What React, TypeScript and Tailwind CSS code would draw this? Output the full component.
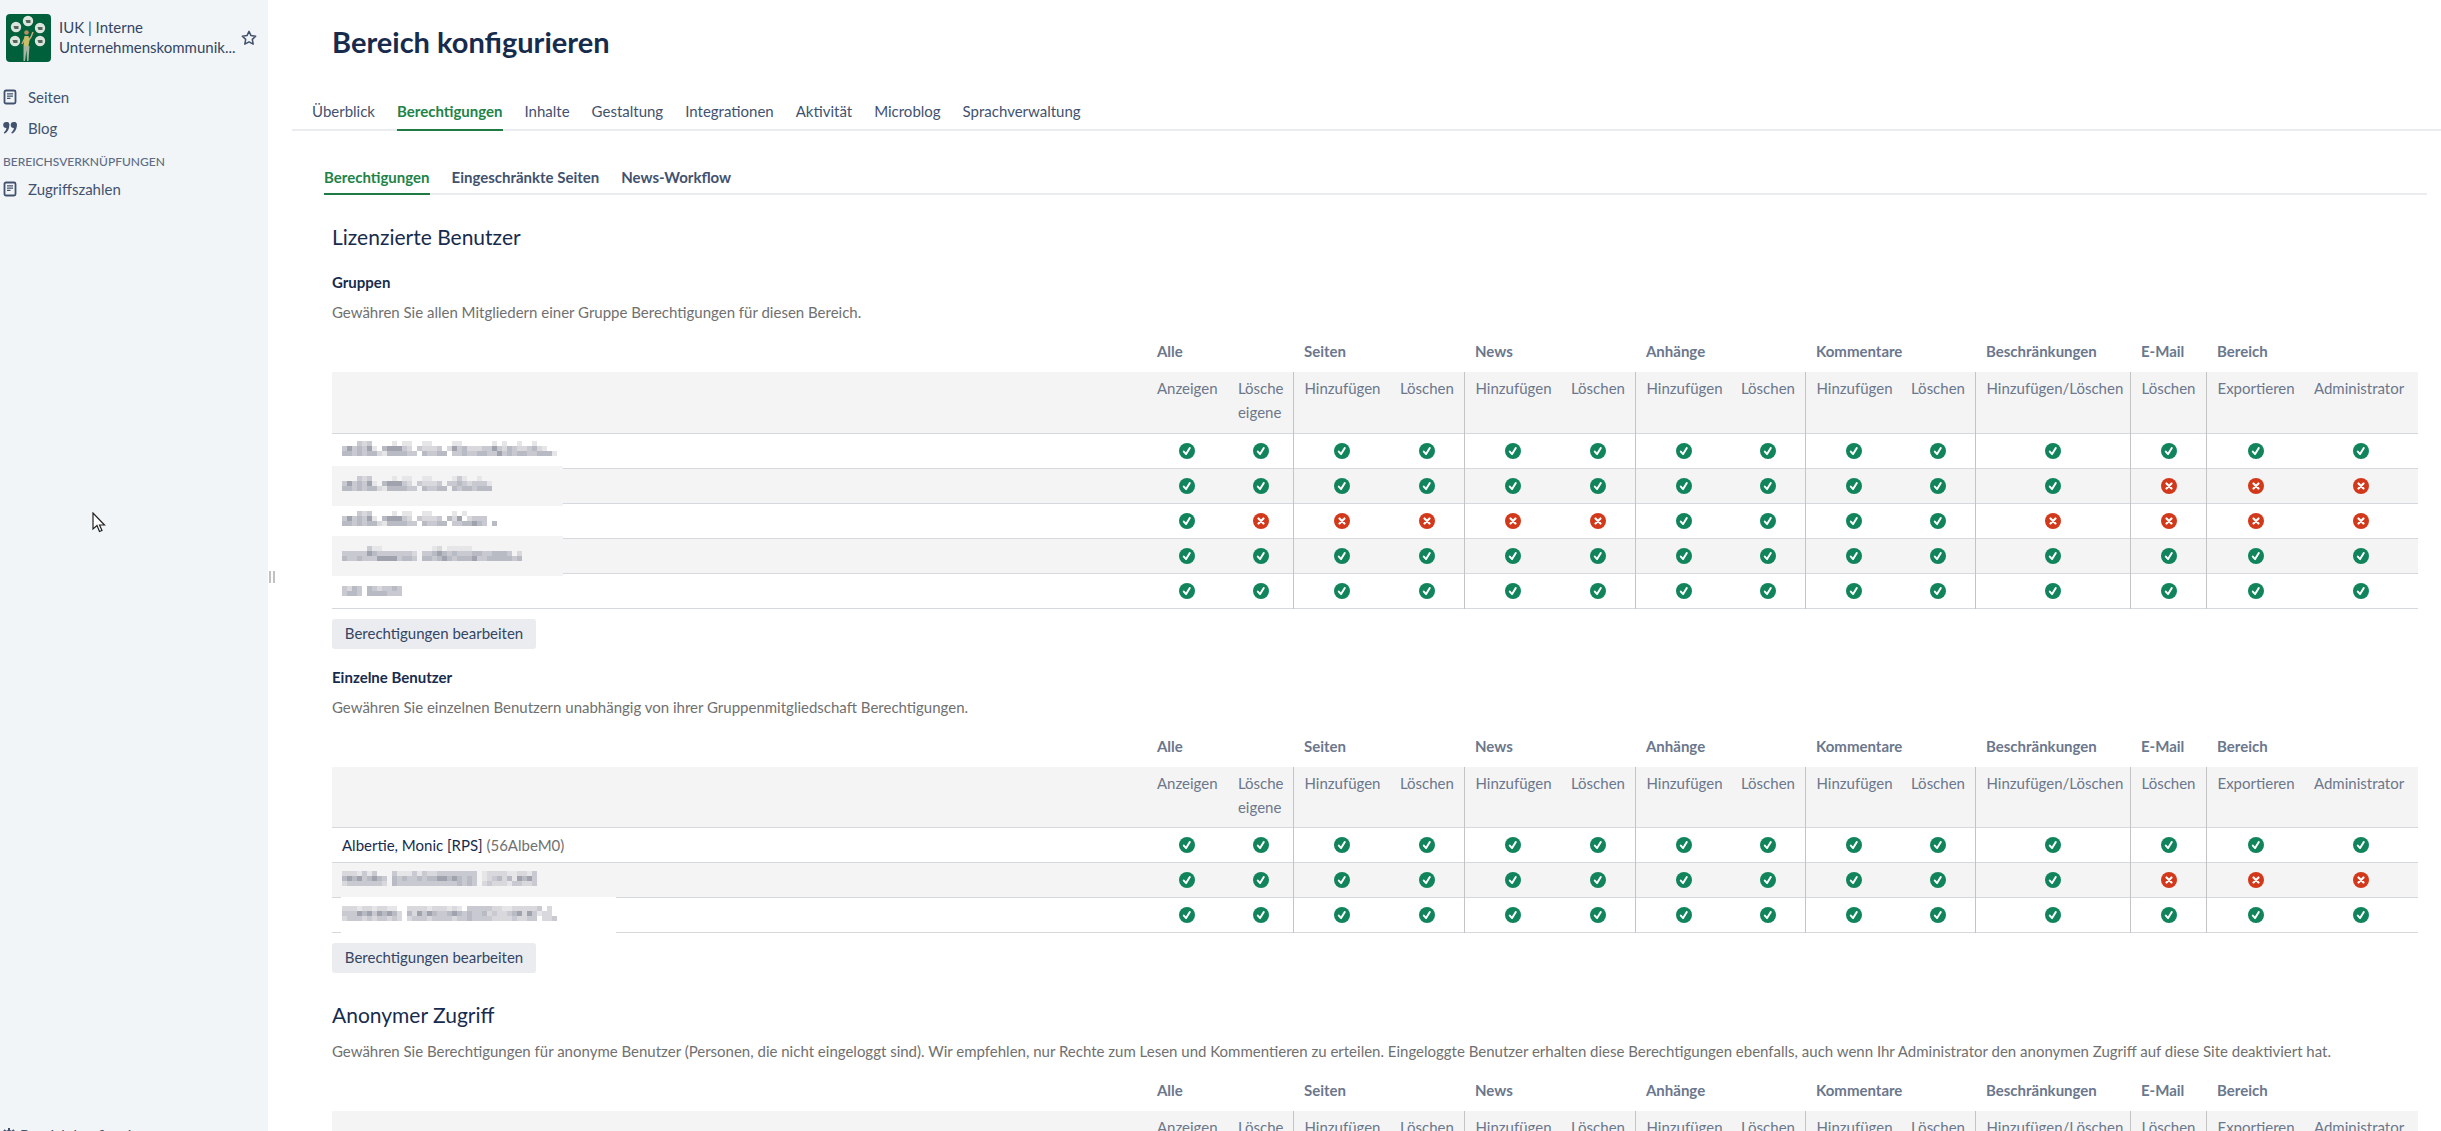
import { Fragment } from 'react';
import clsx from 'clsx';

interface Column {
  label: string;
  start?: boolean;
}

interface PermissionRow {
  name?: string;
  account?: string;
  mask?: string[];
  patch?: string;
  denied: number[];
}

const mainTabs = [
  'Überblick',
  'Berechtigungen',
  'Inhalte',
  'Gestaltung',
  'Integrationen',
  'Aktivität',
  'Microblog',
  'Sprachverwaltung',
];

const subTabs = ['Berechtigungen', 'Eingeschränkte Seiten', 'News-Workflow'];

const columnGroups = [
  { label: 'Alle', span: 2 },
  { label: 'Seiten', span: 2 },
  { label: 'News', span: 2 },
  { label: 'Anhänge', span: 2 },
  { label: 'Kommentare', span: 2 },
  { label: 'Beschränkungen', span: 1 },
  { label: 'E-Mail', span: 1 },
  { label: 'Bereich', span: 2 },
];

const columns: Column[] = [
  { label: 'Anzeigen' },
  { label: 'Lösche eigene' },
  { label: 'Hinzufügen', start: true },
  { label: 'Löschen' },
  { label: 'Hinzufügen', start: true },
  { label: 'Löschen' },
  { label: 'Hinzufügen', start: true },
  { label: 'Löschen' },
  { label: 'Hinzufügen', start: true },
  { label: 'Löschen' },
  { label: 'Hinzufügen/Löschen', start: true },
  { label: 'Löschen', start: true },
  { label: 'Exportieren', start: true },
  { label: 'Administrator' },
];

const groupRows: PermissionRow[] = [
  {
    mask: [
      '   323    1 11  11    11      1 1  1  1',
      '3534351 455532 32223 25342223353243223421',
      '443434421444433 43344 334334433534344334441',
    ],
    denied: [],
  },
  {
    mask: [
      '   323    1 11  11    131  1',
      '3534351 455532 32223 334323331',
      '443434421444433 43344 43443444',
    ],
    patch: 'left-0 w-[231px] -top-[3px] -bottom-[3px] bg-[#f4f4f4]',
    denied: [11, 12, 13],
  },
  {
    mask: [
      '   323    1 11  11    1 1',
      '3534351 455532 32223 425 2333',
      '443434421444433 43344 3344543 4',
    ],
    denied: [1, 2, 3, 4, 5, 10, 11, 12, 13],
  },
  {
    mask: [
      '     311          12 11111',
      '333335433333332 334543433344334443 2',
      '433433355553443 44345434445334444434',
    ],
    patch: 'left-0 w-[231px] -top-[3px] -bottom-[3px] bg-[#f4f4f4]',
    denied: [],
  },
  { mask: ['', '3243 4323343', '3443 4444333'], denied: [] },
];

const userRows: PermissionRow[] = [
  { name: 'Albertie, Monic [RPS]', account: '(56AlbeM0)', denied: [] },
  {
    mask: [
      '2221313   31113132233333333 12222112213',
      '454534543 43433434455454343 12342415453',
      '233333332 43333333333334343 23222133223',
    ],
    denied: [11, 12, 13],
  },
  {
    mask: [
      '22212212211  22221222121 333332211222223 2',
      '333545354542 42535433454343342322345253122',
      '233323233232 23332333323343333222232233 223',
    ],
    patch: 'left-[9px] w-[275px] -top-px -bottom-px bg-white',
    denied: [],
  },
];

const shades: Record<string, string> = {
  '1': '#e6e6e8',
  '2': '#d9d9dd',
  '3': '#c9cad1',
  '4': '#b9bbc4',
  '5': '#a0a2ae',
};

function RedactedName({ mask }: { mask: string[] }) {
  return (
    <svg width="230" height="15" className="relative mb-1 block" shapeRendering="crispEdges" aria-hidden="true">
      {mask.map((line, y) =>
        line.split('').map((level, x) =>
          shades[level] ? (
            <rect key={`${x}-${y}`} x={x * 5} y={y * 5} width="5" height="5" fill={shades[level]} />
          ) : null
        )
      )}
    </svg>
  );
}

function Allowed() {
  return (
    <svg width="16" height="16" viewBox="0 0 16 16" className="mx-auto block" role="img" aria-label="Erlaubt">
      <circle cx="8" cy="8" r="8" fill="#11845b" />
      <path d="M4.8 8.6l2.3 2.5 3.7-6" fill="none" stroke="#fff" strokeWidth="2" strokeLinecap="round" strokeLinejoin="round" />
    </svg>
  );
}

function Denied() {
  return (
    <svg width="16" height="16" viewBox="0 0 16 16" className="mx-auto block" role="img" aria-label="Verweigert">
      <circle cx="8" cy="8" r="8" fill="#d2381a" />
      <path d="M5.5 5.5l5 5m0-5l-5 5" fill="none" stroke="#fff" strokeWidth="2.2" strokeLinecap="round" />
    </svg>
  );
}

function PageIcon() {
  return (
    <svg width="14" height="16" viewBox="0 0 14 16" fill="none" stroke="#42526e" aria-hidden="true">
      <rect x="1.5" y="1.5" width="11" height="13" rx="1.5" strokeWidth="1.8" />
      <path d="M4 4.8h6M4 7.1h6M4 9.4h3.5" strokeWidth="1.3" />
    </svg>
  );
}

function QuoteIcon() {
  return (
    <svg width="14" height="14" viewBox="0 0 14 14" fill="#42526e" aria-hidden="true">
      <path d="M3.2 1A3 3 0 0 1 6.3 4.2C6.3 8 4.7 11 1.5 12.7L.8 11.5C2.3 10.3 3.2 8.9 3.4 7.1z" />
      <circle cx="3.2" cy="4" r="3" />
      <path d="M10.7 1A3 3 0 0 1 13.8 4.2C13.8 8 12.2 11 9 12.7L8.3 11.5C9.8 10.3 10.7 8.9 10.9 7.1z" />
      <circle cx="10.7" cy="4" r="3" />
    </svg>
  );
}

function StarIcon() {
  return (
    <svg width="16" height="16" viewBox="0 0 16 16" fill="none" stroke="#42526e" strokeWidth="1.5" strokeLinejoin="round" aria-hidden="true">
      <path d="M8 1.4l2 4.2 4.7.6-3.4 3.2.9 4.7L8 11.8l-4.2 2.3.9-4.7L1.3 6.2 6 5.6z" />
    </svg>
  );
}

function SpaceLogo() {
  const bubbles = [
    [10, 13],
    [22, 7],
    [34, 14],
    [9, 27],
    [34, 27],
  ];
  return (
    <svg width="45" height="48" viewBox="0 0 45 48" className="shrink-0 rounded-sm" aria-hidden="true">
      <rect width="45" height="48" fill="#00603c" />
      {bubbles.map(([cx, cy]) => (
        <g key={`${cx}-${cy}`}>
          <circle cx={cx} cy={cy} r="5.2" fill="#dce5dc" />
          <path d={`M${cx - 2.5} ${cy - 1}h5v3h-4z`} fill="#54665c" />
        </g>
      ))}
      <path d="M16 30l3-6 3 3 3-4 2-5" fill="none" stroke="#c8ad86" strokeWidth="1.5" />
      <path d="M18.5 22h4l1 4-1 6h-5z" fill="#c9bd68" />
      <circle cx="20.5" cy="18.5" r="2.3" fill="#b98d60" />
      <path d="M17.5 32h6l-1 15H21l-.5-11L19 47h-1.5z" fill="#a9b3a0" />
    </svg>
  );
}

function Sidebar() {
  return (
    <aside className="relative flex h-[calc(100vh+14px)] w-[268px] shrink-0 flex-col bg-[#f1f5f8] text-[#42526e]">
      <div className="flex items-center pt-[14px] pl-[6px]">
        <SpaceLogo />
        <a href="#" className="ml-2 w-[178px] pb-[3px] leading-5 text-[#344563]">
          IUK | Interne
          <br />
          Unternehmenskommunik...
        </a>
        <button type="button" aria-label="Favorit" className="ml-1">
          <StarIcon />
        </button>
      </div>

      <nav className="mt-[19px] pl-[3px]">
        <a href="#" className="flex h-[31px] items-center gap-[11px]">
          <PageIcon />
          Seiten
        </a>
        <a href="#" className="flex h-[31px] items-center gap-[11px]">
          <QuoteIcon />
          Blog
        </a>
        <h2 className="mt-2 text-[12px] leading-[22px] font-medium text-[#5e6c84]">BEREICHSVERKNÜPFUNGEN</h2>
        <a href="#" className="flex h-[31px] items-center gap-[11px]">
          <PageIcon />
          Zugriffszahlen
        </a>
      </nav>

      <a href="#" className="mt-auto flex items-center gap-1 pl-[2px] leading-5">
        <svg width="14" height="14" viewBox="0 0 14 14" fill="none" stroke="#42526e" aria-hidden="true">
          <circle cx="7" cy="7" r="4" strokeWidth="2" />
          <path d="M7 0v3M7 11v3M0 7h3M11 7h3M2 2l2 2M10 10l2 2M12 2l-2 2M4 10l-2 2" strokeWidth="2" />
        </svg>
        Bereich konfigurieren
      </a>

      <div className="absolute top-[571px] left-[269px] flex gap-[2px]">
        <span className="h-3 w-[2px] bg-[#c1c1c1]" />
        <span className="h-3 w-[2px] bg-[#c1c1c1]" />
      </div>
      <svg width="14" height="21" viewBox="0 0 14 21" className="absolute top-[512px] left-[92px]" aria-hidden="true">
        <path d="M1 1v16l4-3.5 2.5 6 2.5-1-2.5-5.5h5z" fill="#fff" stroke="#222" strokeWidth="1.2" />
      </svg>
    </aside>
  );
}

function PermissionTable({ rows }: { rows: PermissionRow[] }) {
  return (
    <table className="w-full table-fixed border-collapse">
      <colgroup>
        <col />
        <col className="w-[81px]" />
        <col className="w-[66px]" />
        <col className="w-[96px]" />
        <col className="w-[75px]" />
        <col className="w-[96px]" />
        <col className="w-[75px]" />
        <col className="w-[95px]" />
        <col className="w-[75px]" />
        <col className="w-[95px]" />
        <col className="w-[75px]" />
        <col className="w-[155px]" />
        <col className="w-[76px]" />
        <col className="w-[97px]" />
        <col className="w-[114px]" />
      </colgroup>
      <thead className="text-left text-[#6b778c]">
        <tr className="h-10">
          <td />
          {columnGroups.map(group => (
            <th key={group.label} colSpan={group.span} className="pb-[2px] pl-[10px] font-bold">
              {group.label}
            </th>
          ))}
        </tr>
        <tr className="h-[61px] border-b border-[#d5d8dc] bg-[#f4f4f4] align-top">
          <td />
          {columns.map((column, i) => (
            <th
              key={i}
              className={clsx(
                'pt-[4px] pl-[10px] leading-6 font-normal',
                column.start && 'border-l border-[#c4c4c4]'
              )}
            >
              {column.label}
            </th>
          ))}
        </tr>
      </thead>
      <tbody>
        {rows.map((row, r) => (
          <tr key={r} className="h-[35px] border-b border-[#d5d8dc] even:bg-[#f4f4f4]">
            <td className="relative pl-[10px] text-[#172b4d]">
              {row.patch && <span className={clsx('absolute', row.patch)} />}
              {row.mask ? (
                <RedactedName mask={row.mask} />
              ) : (
                <Fragment>
                  {row.name} <span className="text-[#707070]">{row.account}</span>
                </Fragment>
              )}
            </td>
            {columns.map((column, i) => (
              <td key={i} className={clsx(column.start && 'border-l border-[#c4c4c4]')}>
                {row.denied.includes(i) ? <Denied /> : <Allowed />}
              </td>
            ))}
          </tr>
        ))}
      </tbody>
    </table>
  );
}

function EditButton() {
  return (
    <button type="button" className="mt-[10px] h-[30px] w-[204px] rounded-[3px] bg-[#ebecf0] pb-[2px] text-[#344563]">
      Berechtigungen bearbeiten
    </button>
  );
}

export default function App() {
  return (
    <div className="flex h-screen overflow-hidden bg-white font-['Lato',sans-serif] text-[15px] leading-5">
      <Sidebar />

      <main className="min-w-0 flex-1 pl-6">
        <h1 className="pt-6 pl-10 text-[29px] leading-9 font-bold text-[#172b4d]">Bereich konfigurieren</h1>

        <nav className="mt-[31px] flex h-10 gap-[22px] border-b-2 border-[#ebecf0] pl-5 text-[#42526e]">
          {mainTabs.map(tab => (
            <a
              key={tab}
              href="#"
              className={clsx(
                'h-10 pt-[10px]',
                tab === 'Berechtigungen' && 'border-b-2 border-[#1f7a43] font-bold text-[#218348]'
              )}
            >
              {tab}
            </a>
          ))}
        </nav>

        <nav className="mt-[32px] mr-[14px] ml-8 flex h-8 gap-[22px] border-b-2 border-[#ebecf0] font-bold text-[#42526e]">
          {subTabs.map((tab, i) => (
            <a
              key={tab}
              href="#"
              className={clsx('h-8 pt-[4px]', i === 0 && 'border-b-2 border-[#1f7a43] text-[#218348]')}
            >
              {tab}
            </a>
          ))}
        </nav>

        <div className="mr-[23px] ml-10">
          <section>
            <h2 className="mt-[28px] text-[21px] leading-7 text-[#172b4d]">Lizenzierte Benutzer</h2>
            <h3 className="mt-[21px] font-bold text-[#172b4d]">Gruppen</h3>
            <p className="my-[10px] text-[#707070]">
              Gewähren Sie allen Mitgliedern einer Gruppe Berechtigungen für diesen Bereich.
            </p>
            <PermissionTable rows={groupRows} />
            <EditButton />

            <h3 className="mt-[18px] font-bold text-[#172b4d]">Einzelne Benutzer</h3>
            <p className="my-[10px] text-[#707070]">
              Gewähren Sie einzelnen Benutzern unabhängig von ihrer Gruppenmitgliedschaft Berechtigungen.
            </p>
            <PermissionTable rows={userRows} />
            <EditButton />
          </section>

          <section>
            <h2 className="mt-[28px] text-[21px] leading-7 text-[#172b4d]">Anonymer Zugriff</h2>
            <p className="mt-[12px] mb-[10px] text-[#707070]">
              Gewähren Sie Berechtigungen für anonyme Benutzer (Personen, die nicht eingeloggt sind). Wir empfehlen, nur
              Rechte zum Lesen und Kommentieren zu erteilen. Eingeloggte Benutzer erhalten diese Berechtigungen
              ebenfalls, auch wenn Ihr Administrator den anonymen Zugriff auf diese Site deaktiviert hat.
            </p>
            <PermissionTable rows={[]} />
          </section>
        </div>
      </main>
    </div>
  );
}
